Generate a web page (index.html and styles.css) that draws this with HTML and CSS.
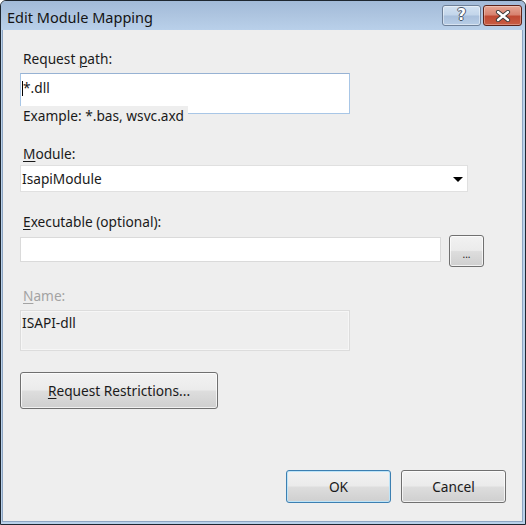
FILE: index.html
```html
<!DOCTYPE html>
<html>
<head>
<meta charset="utf-8">
<link rel="stylesheet" href="styles.css">
</head>
<body>
<div class="window">
  <div class="titlebar">
    <span class="title">Edit Module Mapping</span>
    <div class="caption-btns">
      <div class="cbtn help"><span class="qmark">?</span></div>
      <div class="cbtn close">
        <svg width="18" height="12" viewBox="0 0 18 12">
          <path d="M4 2 L14 10 M14 2 L4 10" stroke="#3a3a3a" stroke-width="4.2" stroke-linecap="round" fill="none"/>
          <path d="M4 2 L14 10 M14 2 L4 10" stroke="#ffffff" stroke-width="2.4" stroke-linecap="round" fill="none"/>
        </svg>
      </div>
    </div>
  </div>
  <div class="frame">
    <div class="client">
      <label class="lbl lbl-first">Request <u>p</u>ath:</label>
      <div class="tb-wrap">
        <div class="textbox tall focus"><span class="caret"></span>*.dll</div>
        <div class="hint">Example: *.bas, wsvc.axd</div>
      </div>

      <label class="lbl lbl-module"><u>M</u>odule:</label>
      <div class="combo">
        <span>IsapiModule</span>
        <svg class="arrow" width="10" height="5" viewBox="0 0 10 5"><polygon points="0,0 10,0 5,5" fill="#000"/></svg>
      </div>

      <label class="lbl lbl-exe"><u>E</u>xecutable (optional):</label>
      <div class="exe-row">
        <div class="textbox exe"></div>
        <div class="btn browse"><span class="dots">...</span></div>
      </div>

      <label class="lbl lbl-name disabled"><u>N</u>ame:</label>
      <div class="textbox tall readonly">ISAPI-dll</div>

      <div class="btn restrictions"><span><u>R</u>equest Restrictions...</span></div>

      <div class="footer">
        <div class="btn dlg default"><span>OK</span></div>
        <div class="btn dlg"><span>Cancel</span></div>
      </div>
    </div>
  </div>
</div>
</body>
</html>
```

FILE: styles.css
```css
* { box-sizing: border-box; }
html, body {
  margin: 0;
  padding: 0;
  background: #ffffff;
}
body {
  font-family: "Noto Sans", "Open Sans", "Liberation Sans", sans-serif;
  font-size: 13.7px;
  color: #1a1a1a;
}
.window {
  width: 526px;
  height: 525px;
  border: 1px solid #1e2630;
  border-radius: 6px 6px 0 0;
  display: flex;
  flex-direction: column;
  background: #b9d1ea;
  overflow: hidden;
}
.titlebar {
  height: 29px;
  flex: none;
  display: flex;
  justify-content: space-between;
  align-items: flex-start;
  background: linear-gradient(#a2bad8 0%, #aec5e0 50%, #b9d0ea 100%);
  padding: 0 3px 0 6px;
}
.title {
  font-size: 14.5px;
  line-height: 20px;
  margin-top: 6px;
  color: #141414;
}
.caption-btns {
  display: flex;
  gap: 2px;
  margin-top: 4px;
}
.cbtn {
  width: 39px;
  height: 21px;
  border-radius: 3px;
  display: flex;
  align-items: center;
  justify-content: center;
}
.help {
  border: 1px solid #6e8098;
  background: linear-gradient(#d3e2f2 0%, #c2d5ea 48%, #a9c0dc 52%, #b8cde6 100%);
  box-shadow: inset 0 0 0 1px rgba(255,255,255,0.45);
}
.qmark {
  font-family: "DejaVu Sans", sans-serif;
  font-weight: bold;
  font-size: 15px;
  line-height: 15px;
  color: #ffffff;
  text-shadow: -1px 0 #4a5566, 1px 0 #4a5566, 0 -1px #4a5566, 0 1px #4a5566;
}
.close {
  border: 1px solid #5b2218;
  background: linear-gradient(#e7a794 0%, #d88370 45%, #c04a33 55%, #c85c43 100%);
  box-shadow: inset 0 0 0 1px rgba(255,255,255,0.3);
}
.frame {
  flex: 1;
  display: flex;
  padding: 0 2px 2px 1px;
  background: #b9d1ea;
}
.client {
  flex: 1;
  display: flex;
  flex-direction: column;
  align-items: flex-start;
  background: #eeeeee;
  border-left: 1px solid #8ea5c2;
  border-right: 1px solid #8ea5c2;
  border-bottom: 1px solid #8ea5c2;
  padding: 19px 16px 18px 17px;
}
.lbl {
  display: block;
  height: 20px;
  line-height: 20px;
  padding-left: 3px;
}
.lbl u { text-decoration-thickness: 1px; text-underline-offset: 2px; }
.lbl-first { margin-bottom: 4px; }
.lbl-module { margin-top: 30px; margin-bottom: 1px; }
.lbl-exe { margin-top: 20px; margin-bottom: 3px; }
.lbl-name { margin-top: 19px; margin-bottom: 4px; }
.disabled { color: #a3a3a3; }

.tb-wrap {
  position: relative;
  width: 330px;
  height: 41px;
}
.textbox {
  background: #ffffff;
  border: 1px solid #dadada;
  line-height: 20px;
  padding: 0 2px 0 1px;
}
.tall {
  width: 330px;
  height: 41px;
}
.focus {
  border-color: #a8c6e6;
  border-top-color: #97b2d3;
  padding-top: 4px;
  padding-left: 1px;
  display: flex;
  align-items: flex-start;
}
.caret {
  display: inline-block;
  width: 1px;
  height: 15px;
  background: #000;
  margin-top: 3px;
  margin-right: 0;
}
.hint {
  position: absolute;
  left: 0;
  top: 33px;
  width: 168px;
  height: 20px;
  line-height: 20px;
  padding-left: 3px;
  background: #eeeeee;
  white-space: nowrap;
}
.combo {
  width: 448px;
  height: 27px;
  background: #ffffff;
  border: 1px solid #e0e0e0;
  display: flex;
  align-items: center;
  justify-content: space-between;
  padding: 0 4px 0 1px;
  line-height: 20px;
}
.arrow { display: block; margin-top: 1px; }
.exe-row {
  display: flex;
  align-items: flex-start;
  gap: 8px;
  height: 32px;
}
.exe {
  width: 421px;
  height: 25px;
  margin-top: 2px;
}
.readonly {
  background: #eeeeee;
  border-color: #dcdcdc;
  box-shadow: inset 0 0 0 1px #f6f6f6;
  padding-top: 2px;
}
.btn {
  border: 1px solid #707070;
  border-radius: 3px;
  background: linear-gradient(#f2f2f2 0%, #ebebeb 48%, #dddddd 52%, #cfcfcf 100%);
  box-shadow: inset 0 0 0 1px rgba(255,255,255,0.7);
  display: flex;
  align-items: center;
  justify-content: center;
  line-height: 20px;
}
.browse {
  width: 35px;
  height: 32px;
}
.dots {
  font-size: 10px;
  line-height: 10px;
  margin-top: 6px;
  letter-spacing: 0;
}
.restrictions {
  width: 198px;
  height: 37px;
  margin-top: 21px;
}
.restrictions u { text-decoration-thickness: 1px; text-underline-offset: 2px; }
.footer {
  margin-top: auto;
  align-self: stretch;
  display: flex;
  justify-content: flex-end;
  gap: 10px;
}
.dlg {
  width: 105px;
  height: 33px;
}
.default {
  border-color: #3c7fb1;
  box-shadow: inset 0 0 0 1px #bde4f8;
}
```
